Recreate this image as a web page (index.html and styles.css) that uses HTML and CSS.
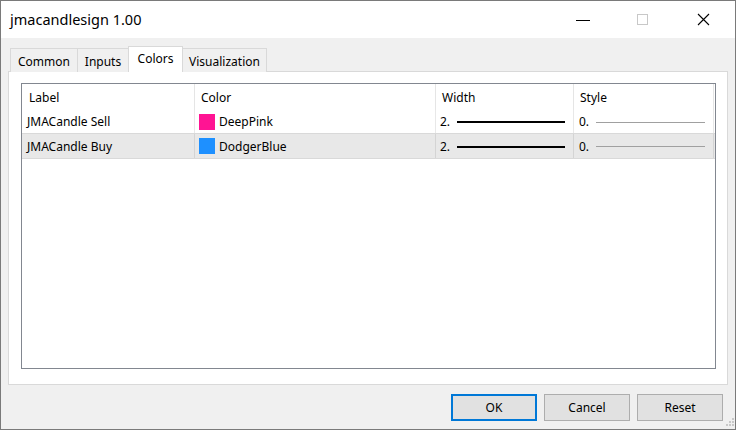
FILE: index.html
```html
<!DOCTYPE html>
<html>
<head>
<meta charset="utf-8">
<link rel="stylesheet" href="styles.css">
</head>
<body>
<div class="window">
  <div class="titlebar">
    <span class="title">jmacandlesign 1.00</span>
    <div class="controls">
      <span class="ctl ctl-min"><svg width="16" height="16" viewBox="0 0 16 16"><path d="M1 8.5H15" stroke="#000" stroke-width="1"/></svg></span>
      <span class="ctl ctl-max"><svg width="16" height="16" viewBox="0 0 16 16"><rect x="2.5" y="2.5" width="10" height="10" fill="none" stroke="#c8c8c8" stroke-width="1"/></svg></span>
      <span class="ctl ctl-close"><svg width="16" height="16" viewBox="0 0 16 16"><path d="M2 2L13 13M13 2L2 13" stroke="#000" stroke-width="1.1"/></svg></span>
    </div>
  </div>
  <div class="content">
    <div class="tabs">
      <div class="tab tab-common">Common</div>
      <div class="tab tab-inputs">Inputs</div>
      <div class="tab tab-colors active">Colors</div>
      <div class="tab tab-vis">Visualization</div>
    </div>
    <div class="panel">
      <div class="list">
        <div class="row head">
          <div class="cell c-label">Label</div>
          <div class="cell c-color">Color</div>
          <div class="cell c-width">Width</div>
          <div class="cell c-style">Style</div>
          <div class="cell c-rest"></div>
        </div>
        <div class="row data">
          <div class="cell c-label">JMACandle Sell</div>
          <div class="cell c-color"><span class="swatch pink"></span>DeepPink</div>
          <div class="cell c-width"><span class="num">2.</span><span class="wline"></span></div>
          <div class="cell c-style"><span class="num">0.</span><span class="sline"></span></div>
          <div class="cell c-rest"></div>
        </div>
        <div class="row data selected">
          <div class="cell c-label">JMACandle Buy</div>
          <div class="cell c-color"><span class="swatch blue"></span>DodgerBlue</div>
          <div class="cell c-width"><span class="num">2.</span><span class="wline"></span></div>
          <div class="cell c-style"><span class="num">0.</span><span class="sline"></span></div>
          <div class="cell c-rest"></div>
        </div>
      </div>
    </div>
    <div class="buttons">
      <button class="btn default">OK</button>
      <button class="btn">Cancel</button>
      <button class="btn">Reset</button>
    </div>
    <div class="grip">
      <svg width="10" height="10" viewBox="0 0 10 10">
        <rect x="8" y="0" width="2" height="2" fill="#c8c8c8"/>
        <rect x="5" y="3" width="2" height="2" fill="#c8c8c8"/>
        <rect x="8" y="3" width="2" height="2" fill="#c8c8c8"/>
        <rect x="2" y="6" width="2" height="2" fill="#c8c8c8"/>
        <rect x="5" y="6" width="2" height="2" fill="#c8c8c8"/>
        <rect x="8" y="6" width="2" height="2" fill="#c8c8c8"/>
      </svg>
    </div>
  </div>
</div>
</body>
</html>
```
FILE: styles.css
```css
* { box-sizing: border-box; }
html, body { margin: 0; padding: 0; }
body {
  width: 736px;
  height: 430px;
  overflow: hidden;
  font-family: "Noto Sans", "Open Sans", sans-serif;
  font-size: 12px;
  color: #000;
  background: #fff;
}
.window {
  width: 736px;
  height: 430px;
  border: 1px solid #7a7a7a;
  display: flex;
  flex-direction: column;
}
.titlebar {
  height: 37px;
  background: #fff;
  display: flex;
  align-items: center;
  padding-left: 9px;
  flex: none;
}
.title {
  font-size: 14.5px;
  color: #000;
  margin-top: -1px;
}
.controls {
  margin-left: auto;
  display: flex;
  align-items: center;
  height: 100%;
}
.ctl {
  width: 60px;
  height: 100%;
  display: flex;
  align-items: center;
  justify-content: center;
}
.ctl-min { width: 60px; margin-right: 0; }
.ctl-close { width: 62px; margin-right: 0; }
.ctl svg { display: block; }
.content {
  flex: 1;
  background: #f0f0f0;
  padding: 8px 7px 0 7px;
  display: flex;
  flex-direction: column;
  position: relative;
}
.tabs {
  display: flex;
  align-items: flex-end;
  height: 26px;
  padding-left: 2px;
  margin-bottom: -1px;
  position: relative;
  z-index: 1;
}
.tab {
  height: 24px;
  border: 1px solid #d9d9d9;
  border-bottom: none;
  background: #f0f0f0;
  display: flex;
  align-items: center;
  justify-content: center;
  margin-right: -1px;
  padding-top: 1px;
}
.tab-common { width: 68px; }
.tab-inputs { width: 52px; }
.tab-colors { width: 55px; }
.tab-vis { width: 85px; }
.tab.active {
  height: 26px;
  background: #fff;
  padding-top: 0;
  padding-bottom: 2px;
  position: relative;
  z-index: 2;
}
.panel {
  height: 314px;
  background: #fff;
  border: 1px solid #d9d9d9;
  padding: 11px 11px 15px 12px;
  display: flex;
  flex: none;
}
.list {
  flex: 1;
  border: 1px solid #828790;
  background: #fff;
  display: flex;
  flex-direction: column;
}
.row {
  display: flex;
  height: 23px;
}
.row.head {
  height: 26px;
}
.cell {
  display: flex;
  align-items: center;
  white-space: nowrap;
}
.head .cell {
  border-right: 1px solid #e5e5e5;
}
.data .cell {
  border-right: 1px solid #e8e8e8;
}
.c-label { width: 173px; padding-left: 5px; }
.head .c-label { padding-left: 7px; }
.c-color { width: 241px; padding-left: 4px; }
.head .c-color { padding-left: 6px; }
.c-width { width: 138px; padding-left: 4px; }
.head .c-width { padding-left: 6px; }
.c-style { width: 140px; padding-left: 5px; }
.head .c-style { padding-left: 6px; }
.c-rest { flex: 1; border-right: none !important; }
.row.selected {
  height: 26px;
  background: #e8e8e8;
  border-top: 1px solid #d9d9d9;
  border-bottom: 1px solid #d9d9d9;
}
.row.selected .cell { border-right-color: #d4d4d4; }
.swatch {
  width: 16px;
  height: 16px;
  margin-right: 4px;
  flex: none;
}
.swatch.pink { background: #ff1493; }
.swatch.blue { background: #1e90ff; }
.num { width: 17px; flex: none; }
.wline {
  width: 108px;
  height: 2px;
  background: #000;
  margin-top: 1px;
}
.sline {
  width: 109px;
  height: 1px;
  background: #a0a0a0;
  margin-top: 1px;
}
.buttons {
  display: flex;
  justify-content: flex-end;
  gap: 7px;
  padding-top: 9px;
  padding-right: 5px;
}
.btn {
  width: 86px;
  height: 27px;
  background: #e1e1e1;
  border: 1px solid #adadad;
  font-family: "Noto Sans", "Open Sans", sans-serif;
  font-size: 12px;
  color: #000;
  padding: 0;
  margin: 0;
}
.btn.default {
  border: 2px solid #0078d7;
}
.grip {
  position: absolute;
  right: 1px;
  bottom: 1px;
  width: 10px;
  height: 10px;
}
.grip svg { display: block; }
```
